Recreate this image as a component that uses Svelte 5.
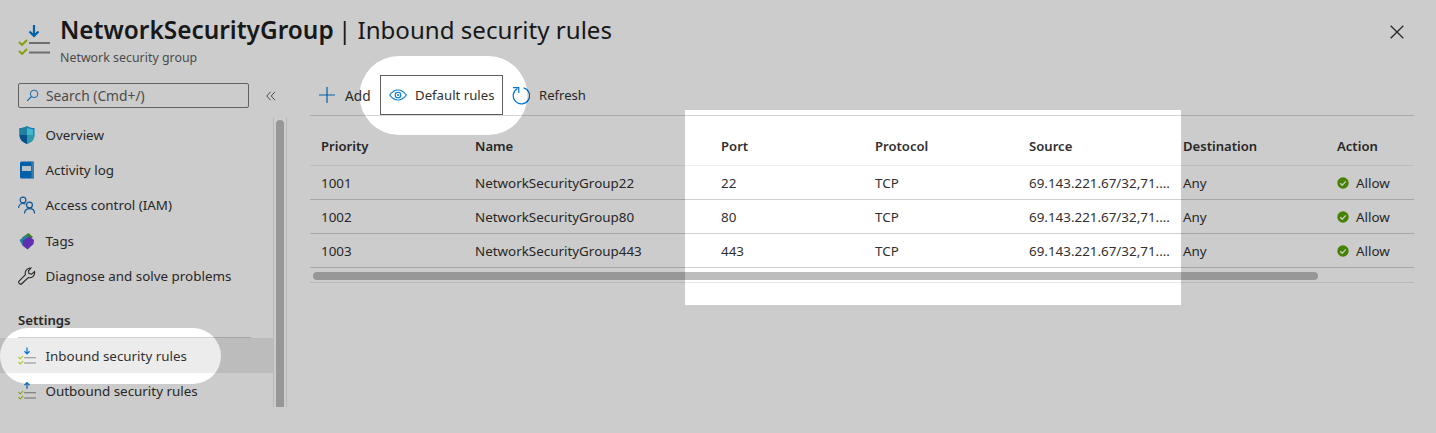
<script lang="ts">
  const nav = [
    { label: 'Overview', icon: 'shield' },
    { label: 'Activity log', icon: 'log' },
    { label: 'Access control (IAM)', icon: 'iam' },
    { label: 'Tags', icon: 'tag' },
    { label: 'Diagnose and solve problems', icon: 'wrench' }
  ];

  const rules = [
    { priority: 1001, name: 'NetworkSecurityGroup22', port: 22 },
    { priority: 1002, name: 'NetworkSecurityGroup80', port: 80 },
    { priority: 1003, name: 'NetworkSecurityGroup443', port: 443 }
  ];

  const columns = ['Priority', 'Name', 'Port', 'Protocol', 'Source', 'Destination', 'Action'];
</script>

{#snippet ruleIcon(up: boolean, big: boolean)}
  <svg class={big ? 'rule-big' : 'rule-small'} viewBox="0 0 32 32" fill="none">
    {#if up}
      <path d="M16 1v11M11.500 5.500 16 1l4.500 4.500" stroke="#0078d4" stroke-width="2.200" />
    {:else}
      <path d="M16 1v11M11.500 7.500 16 12l4.500-4.500" stroke="#0078d4" stroke-width="2.200" />
    {/if}
    <path d="M11 19h21M11 28.500h21" stroke="#8a8a8a" stroke-width="2" />
    <path d="M1 18l3 3 5-5M1 27l3 3 5-5" stroke="#a4c400" stroke-width="1.800" />
  </svg>
{/snippet}

<div class="page">
  <header class="head">
    <div class="head-icon">{@render ruleIcon(false, true)}</div>
    <div class="titles">
      <h1><b>NetworkSecurityGroup</b> | Inbound security rules</h1>
      <div class="sub">Network security group</div>
    </div>
    <svg class="close" viewBox="0 0 14 14" fill="none">
      <path d="M.7.7l12.600 12.600M13.300.7.7 13.300" stroke="#323130" stroke-width="1.300" />
    </svg>
  </header>

  <div class="body">
    <aside class="side">
      <div class="search-row">
        <div class="search">
          <svg viewBox="0 0 16 16" fill="none">
            <circle cx="10" cy="6" r="4.600" stroke="#0078d4" stroke-width="1.100" />
            <path d="M6.600 9.400 1.500 14.500" stroke="#0078d4" stroke-width="1.300" />
          </svg>
          <span>Search (Cmd+/)</span>
        </div>
        <svg class="collapse" viewBox="0 0 10 10" fill="none">
          <path d="M4.600.8.8 5l3.800 4.200M9 .8 5.200 5 9 9.200" stroke="#605e5c" stroke-width="1" />
        </svg>
      </div>

      <div class="side-scroll">
        <nav class="menu">
          {#each nav as item}
            <div class="item">
              <span class="ico">
                {#if item.icon === 'shield'}
                  <svg viewBox="0 0 18 18">
                    <path d="M9 0c2 1.500 4.500 2 7.500 2v7c0 4.500-3.500 7.500-7.500 9-4-1.500-7.500-4.500-7.500-9V2C4.500 2 7 1.500 9 0z" fill="#1b93eb" />
                    <path d="M9 0v9H1.500V2C4.500 2 7 1.500 9 0z" fill="#2aa0c9" />
                    <path d="M9 9h7.500c0 4.500-3.500 7.500-7.500 9z" fill="#39c0d8" />
                    <path d="M9 1.500c2 1 4 1.700 6.200 1.700V9H9z" fill="#50e6ff" />
                    <path d="M9 9v9c-4-1.500-7.500-4.500-7.500-9z" fill="#0a64ad" />
                  </svg>
                {:else if item.icon === 'log'}
                  <svg viewBox="0 0 18 18">
                    <rect x="2" y="0.500" width="14" height="17" rx="1.500" fill="#0078d4" />
                    <path d="M13.500.5H15a1 1 0 0 1 1 1v15a1 1 0 0 1-1 1h-1.500z" fill="#4a9bd6" />
                    <rect x="4" y="5" width="9" height="5" fill="#e8f2fa" />
                  </svg>
                {:else if item.icon === 'iam'}
                  <svg viewBox="0 0 18 18" fill="none" stroke="#0f6cbd" stroke-width="1.200">
                    <circle cx="5" cy="4" r="2.900" />
                    <path d="M.6 12c0-3 2-4.500 4.400-4.500 1 0 1.800.2 2.500.7" />
                    <circle cx="11.500" cy="9" r="2.900" />
                    <path d="M6.500 17.500c0-3 2-4.800 5-4.800s5 1.800 5 4.800" />
                  </svg>
                {:else if item.icon === 'tag'}
                  <svg viewBox="0 0 18 18">
                    <path d="M4 5.500 10.500 1l4.500 4-7 5z" fill="#4ba02a" />
                    <path d="M1.500 8 8.500 3l3 3-7 7.500z" fill="#2aa0c9" />
                    <path d="M5 8.500 11.500 4.500 16 8l-.5 4-6 5.500-5-4z" fill="#773adc" />
                  </svg>
                {:else}
                  <svg viewBox="0 0 18 18" fill="none">
                    <path d="M11 1.200a5 5 0 0 1 2-.2l-2.500 2.800.4 2.800 2.800.5L16.500 4.500a5 5 0 0 1-6.200 6L4 16.500a1.800 1.800 0 0 1-2.700-2.600l6.200-6.300A5 5 0 0 1 11 1.200z" stroke="#323130" stroke-width="1.100" />
                  </svg>
                {/if}
              </span>
              <span>{item.label}</span>
            </div>
          {/each}
        </nav>

        <div class="group">Settings</div>
        <div class="divider"></div>
        <div class="item selected">
          <span class="ico">{@render ruleIcon(false, false)}</span>
          <span>Inbound security rules</span>
        </div>
        <div class="item">
          <span class="ico">{@render ruleIcon(true, false)}</span>
          <span>Outbound security rules</span>
        </div>
      </div>
      <div class="vbar"><div class="vthumb"></div></div>
    </aside>

    <main class="main">
      <div class="toolbar">
        <button class="tool add">
          <svg viewBox="0 0 16 16" fill="none">
            <path d="M8 0v16M0 8h16" stroke="#0078d4" stroke-width="1.200" />
          </svg>
          Add
        </button>
        <button class="tool focused">
          <svg viewBox="0 0 18 12" fill="none">
            <path d="M.7 6C3 2.800 5.800 1 9 1s6 1.800 8.300 5C15 9.200 12.200 11 9 11S3 9.200.7 6z" stroke="#0078d4" stroke-width="1.100" />
            <circle cx="9" cy="6" r="2.800" stroke="#0078d4" stroke-width="1.100" />
            <circle cx="9" cy="6" r="1" fill="#0078d4" />
          </svg>
          Default rules
        </button>
        <button class="tool refresh">
          <svg viewBox="0 0 18 20" fill="none">
            <path d="M5.500 3.500a8.200 8.200 0 1 0 6-.7" stroke="#0078d4" stroke-width="1.200" />
            <path d="M1 2.600h5.800v5.400" stroke="#0078d4" stroke-width="1.200" />
          </svg>
          Refresh
        </button>
      </div>

      <div class="table">
        <div class="row heading">
          {#each columns as col}
            <div class="cell">{col}</div>
          {/each}
        </div>
        {#each rules as rule}
          <div class="row">
            <div class="cell">{rule.priority}</div>
            <div class="cell">{rule.name}</div>
            <div class="cell">{rule.port}</div>
            <div class="cell">TCP</div>
            <div class="cell">69.143.221.67/32,71....</div>
            <div class="cell">Any</div>
            <div class="cell allow">
              <svg viewBox="0 0 12 12">
                <circle cx="6" cy="6" r="5.700" fill="#57a300" />
                <path d="M3.200 6.200l2 2 3.600-3.800" fill="none" stroke="#fff" stroke-width="1.300" />
              </svg>
              Allow
            </div>
          </div>
        {/each}
        <div class="hbar"><div class="hthumb"></div></div>
      </div>
    </main>
  </div>

  <!-- dim layer with the three spotlight cut-outs -->
  <svg class="dim" viewBox="0 0 1436 433">
    <path
      fill="#000"
      fill-opacity="0.2"
      fill-rule="evenodd"
      d="M0 0H1436V433H0z
         M685 110H1181V305H685z
         M399 56H488a39.500 39.500 0 0 1 0 79H399a39.500 39.500 0 0 1 0-79z
         M28 328H193a28 28 0 0 1 0 56H28a28 28 0 0 1 0-56z"
    />
  </svg>
</div>

<style>
  :global(body) {
    margin: 0;
    background: #fff;
    overflow: hidden;
  }
  .page {
    position: relative;
    width: 1436px;
    height: 433px;
    overflow: hidden;
    font-family: 'Noto Sans', 'Open Sans', sans-serif;
    font-size: 13.400px;
    color: #323130;
  }
  .dim {
    position: absolute;
    inset: 0;
    width: 1436px;
    height: 433px;
    pointer-events: none;
  }

  .head {
    display: flex;
    height: 75px;
    box-sizing: border-box;
    padding: 14px 32px 0 18px;
  }
  .head-icon {
    width: 42px;
    padding-top: 10px;
    flex: none;
  }
  .rule-big {
    display: block;
    width: 32px;
    height: 32px;
  }
  .rule-small {
    display: block;
    width: 18px;
    height: 18px;
  }
  .titles {
    flex: 1;
  }
  h1 {
    margin: 0;
    font-size: 24.100px;
    line-height: 32px;
    font-weight: 400;
    color: #201f1e;
    white-space: nowrap;
  }
  h1 b {
    font-size: 24.400px;
    font-weight: 600;
    margin-right: -2px;
  }
  .sub {
    font-size: 12.400px;
    line-height: 17px;
    margin-top: 3px;
    color: #605e5c;
  }
  .close {
    width: 14px;
    height: 14px;
    margin-top: 11px;
  }

  .body {
    display: flex;
  }
  .side {
    position: relative;
    width: 287px;
    height: 332px;
    flex: none;
  }
  .search-row {
    display: flex;
    align-items: center;
    padding: 8px 0 0 18px;
    height: 25px;
  }
  .search {
    box-sizing: border-box;
    width: 231px;
    height: 25px;
    border: 1px solid #7a7a7a;
    border-radius: 2px;
    display: flex;
    align-items: center;
    gap: 7px;
    padding-left: 7px;
    color: #605e5c;
    font-size: 13.800px;
  }
  .search svg {
    width: 13px;
    height: 13px;
  }
  .collapse {
    width: 10px;
    height: 10px;
    margin-left: 17px;
  }

  .side-scroll {
    width: 273px;
    padding-top: 9px;
  }
  .menu .item:nth-child(4) {
    margin-top: 1px;
  }
  .item {
    display: flex;
    align-items: center;
    height: 35px;
    white-space: nowrap;
  }
  .ico {
    width: 18px;
    height: 18px;
    margin: 0 9.500px 0 18px;
    flex: none;
  }
  .ico svg {
    display: block;
    width: 18px;
    height: 18px;
  }
  .group {
    margin: 14px 0 0 18px;
    height: 30px;
    line-height: 26px;
    font-weight: 600;
    font-size: 13.200px;
  }
  .divider {
    width: 233px;
    margin-left: 18px;
    border-top: 1px solid #d2d0ce;
  }
  .selected {
    background: #ececec;
  }
  .vbar {
    position: absolute;
    top: 42px;
    right: 0;
    width: 14px;
    height: 290px;
    box-sizing: border-box;
    border-left: 1px solid #e8e8e8;
    border-right: 1px solid #e8e8e8;
    padding: 3px 2px 0;
  }
  .vthumb {
    height: 100%;
    background: #bdbdbd;
    border-radius: 4px 4px 0 0;
  }

  .main {
    flex: 1;
    padding: 0 22px 0 23px;
    min-width: 0;
  }
  .toolbar {
    display: flex;
    align-items: center;
    height: 40px;
    margin-top: 0;
  }
  .tool {
    display: flex;
    align-items: center;
    height: 40px;
    border: 0;
    padding: 0;
    background: none;
    font: inherit;
    color: #323130;
  }
  .add {
    padding-left: 9px;
    gap: 10px;
    width: 70px;
    font-size: 13.700px;
  }
  .add svg {
    width: 16px;
    height: 16px;
  }
  .focused {
    box-sizing: border-box;
    width: 123px;
    border: 1px solid #605e5c;
    padding-left: 8px;
    gap: 8px;
    font-size: 13.200px;
  }
  .focused svg {
    width: 18px;
    height: 12px;
  }
  .refresh {
    margin-left: 9px;
    gap: 9px;
    font-size: 13.100px;
  }
  .refresh svg {
    width: 18px;
    height: 20px;
  }

  .table {
    border-top: 1px solid #d6d6d6;
  }
  .row {
    display: grid;
    grid-template-columns: 154px 246px 154px 154px 154px 154px 88px;
    height: 34px;
    box-sizing: border-box;
    border-bottom: 1px solid #d2d0ce;
    align-items: center;
  }
  .heading {
    height: 50px;
    border-bottom-color: #eeeeee;
    font-weight: 600;
    font-size: 13.100px;
    padding-top: 10px;
  }
  .cell {
    padding-left: 11px;
    white-space: nowrap;
    overflow: hidden;
  }
  .allow {
    display: flex;
    align-items: center;
    gap: 7px;
  }
  .allow svg {
    width: 12px;
    height: 12px;
  }
  .hbar {
    height: 15px;
    box-sizing: border-box;
    border-bottom: 1px solid #e8e8e8;
    padding: 4px 0 0 3px;
  }
  .hthumb {
    width: 1005px;
    height: 8px;
    border-radius: 4px;
    background: #bdbdbd;
  }
</style>
